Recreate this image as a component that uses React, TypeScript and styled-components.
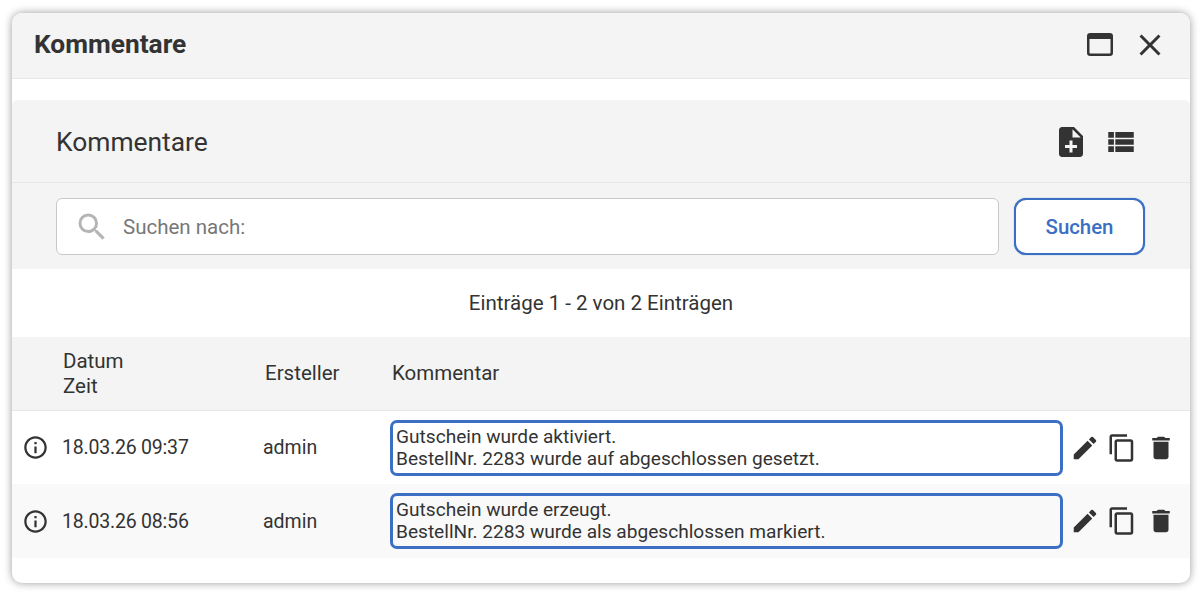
import React from "react"
import styled, { createGlobalStyle } from "styled-components"
import { MdClose, MdContentCopy, MdDelete, MdEdit, MdInfoOutline, MdNoteAdd, MdSearch, MdViewList } from "react-icons/md"

const GlobalStyle = createGlobalStyle`
  html, body {
    margin: 0;
    padding: 0;
    background: #fff;
  }
  body {
    font-family: Roboto, "Liberation Sans", sans-serif;
    color: #333;
  }
`

const Page = styled.div`
  width: 1200px;
  height: 596px;
  padding: 13px 10px 13px 12px;
  box-sizing: border-box;
  overflow: hidden;
`

const Dialog = styled.div`
  width: 1178px;
  height: 570px;
  background: #fff;
  border-radius: 10px;
  box-shadow: 0 0 8px rgba(0, 0, 0, 0.4);
  overflow: hidden;
`

const DialogHeader = styled.header`
  height: 65px;
  border-bottom: 1px solid #e6e6e6;
  background: #f4f4f4;
  padding: 0 22px 0 22px;
  display: flex;
  align-items: center;
  justify-content: space-between;
`

const DialogTitle = styled.h1`
  margin: 0 0 3px;
  font-size: 26.3px;
  font-weight: 700;
`

const WindowButtons = styled.div`
  display: flex;
  align-items: center;
  gap: 19px;
  margin-bottom: 2px;
  color: #333;
`

const Panel = styled.section`
  margin-top: 21px;
  background: #f4f4f4;
  border-radius: 6px 6px 0 0;
`

const PanelHeader = styled.div`
  height: 82px;
  border-bottom: 1px solid #e6e6e6;
  padding: 0 52px 0 44px;
  display: flex;
  align-items: center;
  justify-content: space-between;
`

const PanelTitle = styled.h2`
  margin: 1px 0 0;
  font-size: 26.4px;
  font-weight: 400;
`

const PanelTools = styled.div`
  display: flex;
  align-items: center;
  gap: 15px;
  margin-top: 2px;
  color: #333;
`

const SearchBar = styled.form`
  height: 86px;
  margin: 0;
  padding: 15px 45px 14px 44px;
  box-sizing: border-box;
  display: flex;
  gap: 15px;
`

const SearchField = styled.label`
  flex: 1;
  height: 57px;
  box-sizing: border-box;
  background: #fff;
  border: 1px solid #c8c8c8;
  border-radius: 6px;
  padding-left: 17px;
  display: flex;
  align-items: center;
  gap: 13px;
  color: #b5b5b5;
`

const SearchInput = styled.input`
  flex: 1;
  border: none;
  outline: none;
  background: none;
  padding: 0;
  font: 400 20.5px Roboto, sans-serif;
  color: #333;
  &::placeholder {
    color: #777;
    opacity: 1;
  }
`

const SearchButton = styled.button`
  width: 131px;
  height: 57px;
  box-sizing: border-box;
  background: #fff;
  border: 2px solid #3a6fc4;
  box-shadow: 0 0 1px #3a6fc4;
  border-radius: 12px;
  color: #3a6fc4;
  font: 500 20.4px Roboto, sans-serif;
`

const ResultInfo = styled.div`
  height: 68px;
  display: flex;
  align-items: center;
  justify-content: center;
  font-size: 20.5px;
`

const Row = styled.div<{ $kind: "head" | "odd" | "even" }>`
  display: grid;
  grid-template-columns: 50px 201px 127px 673px 1fr;
  align-items: center;
  height: ${(p) => (p.$kind === "even" ? "74px" : "73px")};
  background: ${(p) => (p.$kind === "head" ? "#f4f4f4" : p.$kind === "even" ? "#f9f9f9" : "#fff")};
  border-bottom: ${(p) => (p.$kind === "head" ? "1px solid #e6e6e6" : "none")};
  font-size: 19.5px;
  line-height: 25px;
`

const HeadCell = styled.div<{ $inset?: number }>`
  padding-left: ${(p) => p.$inset ?? 2}px;
  font-size: 20.5px;
`

const InfoCell = styled.div`
  padding-left: 10px;
  display: flex;
  color: #333;
`

const DateCell = styled.div`
  letter-spacing: -0.2px;
`

const CommentBox = styled.div`
  height: 56px;
  box-sizing: border-box;
  border: 3px solid #3a6fc4;
  border-radius: 7px;
  padding: 3px;
  font-size: 19.1px;
  line-height: 22px;
  white-space: nowrap;
`

const Actions = styled.div`
  padding-left: 7px;
  display: flex;
  align-items: center;
  gap: 7px;
  color: #333;
`

const DeleteIcon = styled(MdDelete)`
  margin-left: 2px;
`

const entries = [
  { date: "18.03.26 09:37", lines: ["Gutschein wurde aktiviert.", "BestellNr. 2283 wurde auf abgeschlossen gesetzt."] },
  { date: "18.03.26 08:56", lines: ["Gutschein wurde erzeugt.", "BestellNr. 2283 wurde als abgeschlossen markiert."] },
]

function MaximizeIcon() {
  return (
    <svg width="26" height="23" viewBox="0 0 26 23" fill="none">
      <rect x="1.25" y="1.25" width="23.5" height="20.5" rx="2" stroke="#333" strokeWidth="2.5" />
      <rect x="1" y="1" width="24" height="5" fill="#333" />
    </svg>
  )
}

export default function App() {
  return (
    <Page>
      <GlobalStyle />
      <Dialog>
        <DialogHeader>
          <DialogTitle>Kommentare</DialogTitle>
          <WindowButtons>
            <MaximizeIcon />
            <MdClose size={36} />
          </WindowButtons>
        </DialogHeader>
        <Panel>
          <PanelHeader>
            <PanelTitle>Kommentare</PanelTitle>
            <PanelTools>
              <MdNoteAdd size={36} />
              <MdViewList size={34} />
            </PanelTools>
          </PanelHeader>
          <SearchBar>
            <SearchField>
              <MdSearch size={36} />
              <SearchInput placeholder="Suchen nach:" />
            </SearchField>
            <SearchButton type="button">Suchen</SearchButton>
          </SearchBar>
        </Panel>
        <ResultInfo>Einträge 1 - 2 von 2 Einträgen</ResultInfo>
        <Row $kind="head">
          <div />
          <HeadCell $inset={1}>Datum<br />Zeit</HeadCell>
          <HeadCell>Ersteller</HeadCell>
          <HeadCell>Kommentar</HeadCell>
          <div />
        </Row>
        {entries.map((entry, i) => (
          <Row key={entry.date} $kind={i % 2 === 0 ? "odd" : "even"}>
            <InfoCell><MdInfoOutline size={27} /></InfoCell>
            <DateCell>{entry.date}</DateCell>
            <div>admin</div>
            <CommentBox>
              {entry.lines[0]}<br />{entry.lines[1]}
            </CommentBox>
            <Actions>
              <MdEdit size={30} />
              <MdContentCopy size={30} />
              <DeleteIcon size={30} />
            </Actions>
          </Row>
        ))}
      </Dialog>
    </Page>
  )
}
